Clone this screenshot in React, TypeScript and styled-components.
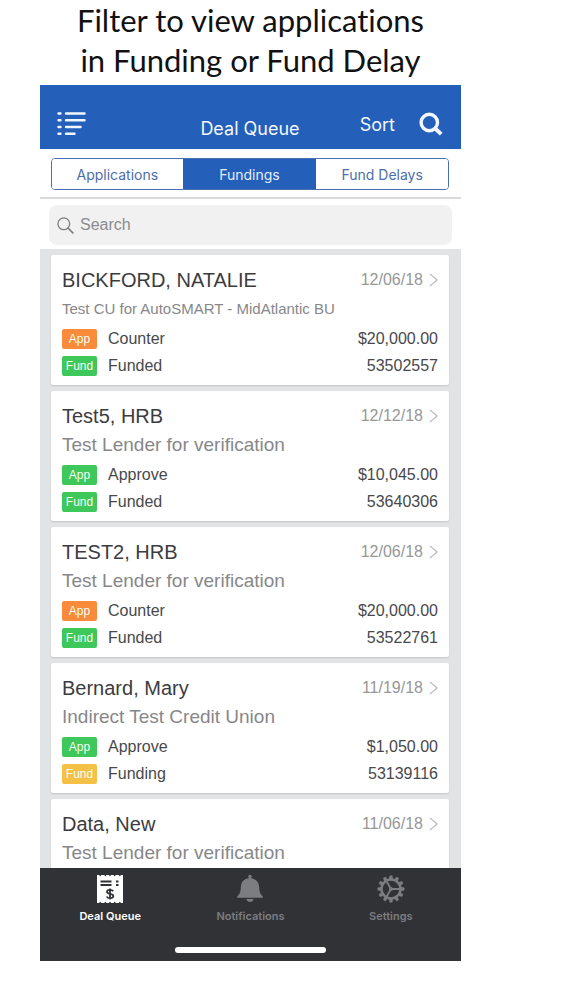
import React, { useState } from "react";
import styled, { createGlobalStyle } from "styled-components";

const GlobalStyle = createGlobalStyle`
  *, *::before, *::after { box-sizing: border-box; }
  body {
    margin: 0;
    background: #fff;
    font-family: "Liberation Sans", Arial, sans-serif;
  }
  button { font: inherit; border: 0; background: none; padding: 0; cursor: pointer; }
`;

const uiFont = `Inter, "Liberation Sans", sans-serif`;

const Page = styled.main`
  display: flex;
  flex-direction: column;
  height: 100vh;
  padding: 0 102px 39px 40px;
`;

const Caption = styled.h1`
  margin: 0;
  padding-bottom: 5px;
  color: #111;
  font: 400 31px/40px Lato, sans-serif;
  font-variant-ligatures: none;
  text-align: center;
`;

const Phone = styled.section`
  display: flex;
  flex: 1;
  flex-direction: column;
  min-height: 0;
  background: #fff;
`;

const Header = styled.header`
  display: grid;
  grid-template-columns: 1fr auto 1fr;
  align-items: end;
  height: 64px;
  padding: 0 18px 9px 17px;
  background: #2460b9;
  color: #f2f7ff;
  font-family: ${uiFont};
`;

const Title = styled.h2`
  margin: 0;
  font-size: 18px;
  font-weight: 400;
  line-height: 22px;
`;

const HeaderButton = styled.button`
  display: flex;
  align-items: center;
  height: 32px;
  color: inherit;
  font-size: 18px;
`;

const HeaderActions = styled.div`
  display: flex;
  justify-content: flex-end;
  gap: 24px;
`;

const Segments = styled.nav`
  padding: 9px 12px 7px 11px;
  border-bottom: 2px solid #d9dadb;
`;

const SegmentGroup = styled.div`
  display: grid;
  grid-template-columns: 131fr 134fr 132fr;
  overflow: hidden;
  border: 1px solid #4a6fae;
  border-radius: 4px;
`;

const Segment = styled.button<{ $active: boolean }>`
  height: 30px;
  background: ${(p) => (p.$active ? "#2460b9" : "#fff")};
  color: ${(p) => (p.$active ? "#e4eefb" : "#4c6ea9")};
  font-family: ${uiFont};
  font-size: 14px;
`;

const SearchBar = styled.label`
  display: flex;
  align-items: center;
  gap: 6px;
  height: 40px;
  margin: 6px 9px 4px;
  padding: 0 8px;
  border-radius: 8px;
  background: #f1f1f2;
  color: #7f7f82;
`;

const SearchInput = styled.input`
  flex: 1;
  min-width: 0;
  padding: 0;
  border: 0;
  outline: 0;
  background: none;
  color: #444;
  font: 16px/20px "Liberation Sans", Arial, sans-serif;
  &::placeholder { color: #8b8b8e; opacity: 1; }
`;

const DealList = styled.ul`
  display: flex;
  flex: 1;
  flex-direction: column;
  gap: 6px;
  min-height: 0;
  margin: 0;
  padding: 6px 12px 6px 11px;
  overflow-y: auto;
  scrollbar-width: none;
  background: #e2e3e5;
  list-style: none;
`;

const Card = styled.li`
  flex: none;
  padding: 13px 11px 9px;
  border-radius: 2px;
  background: #fff;
  box-shadow: 0 1px 2px rgba(0, 0, 0, 0.14);
`;

const CardHead = styled.div`
  display: flex;
  align-items: center;
  justify-content: space-between;
`;

const Name = styled.h3`
  margin: 0;
  color: #3c3c40;
  font-size: 20px;
  font-weight: 400;
  line-height: 24px;
`;

const DateLabel = styled.span`
  display: flex;
  align-items: center;
  gap: 6px;
  color: #97979a;
  font-size: 16px;
`;

const Lender = styled.p<{ $small?: boolean }>`
  margin: 7px 0 10px;
  color: #87878a;
  font-size: ${(p) => (p.$small ? 15 : 19)}px;
  line-height: 20px;
  white-space: nowrap;
`;

const StatusRow = styled.div`
  display: flex;
  align-items: center;
  gap: 11px;
  color: #48484c;
  font-size: 16px;
  line-height: 20px;
  & + & { margin-top: 7px; }
`;

const Badge = styled.span<{ $color: string }>`
  width: 35px;
  border-radius: 2px;
  background: ${(p) => p.$color};
  color: #f4fff4;
  font-size: 12px;
  text-align: center;
`;

const Value = styled.span`
  margin-left: auto;
`;

const TabBar = styled.nav`
  display: flex;
  flex-direction: column;
  align-items: center;
  justify-content: space-between;
  height: 93px;
  padding: 6px 0 8px;
  background: #303236;
`;

const Tabs = styled.div`
  display: grid;
  grid-template-columns: repeat(3, 1fr);
  width: 100%;
`;

const Tab = styled.button<{ $active: boolean }>`
  display: flex;
  flex-direction: column;
  align-items: center;
  gap: 4px;
  color: ${(p) => (p.$active ? "#fff" : "#7c7d80")};
  font-family: ${uiFont};
  font-size: 11px;
  font-weight: 600;
  line-height: 16px;
`;

const HomeIndicator = styled.div`
  width: 36%;
  height: 6px;
  border-radius: 3px;
  background: #fff;
`;

const MenuIcon = () => (
  <svg width="29" height="24" viewBox="0 0 29 24" stroke="currentColor" strokeWidth="2.400" strokeLinecap="round" aria-hidden="true">
    <path d="M1.500 1.500h2M1.500 8.200h2M1.500 15h2M1.500 21.800h2M9 1.500h18.500M9 8.200h18.500M9 15h14.500M9 21.800h8.500" />
  </svg>
);

const SearchIcon = () => (
  <svg width="24" height="24" viewBox="0 0 24 24" fill="none" stroke="currentColor" aria-hidden="true">
    <circle cx="10.300" cy="10.500" r="8.200" strokeWidth="3.400" />
    <path d="M16.200 16.500l6 5.600" strokeWidth="4" />
  </svg>
);

const ThinSearchIcon = () => (
  <svg width="17" height="17" viewBox="0 0 17 17" fill="none" stroke="currentColor" strokeWidth="1.300" aria-hidden="true">
    <circle cx="6.800" cy="6.800" r="5.900" />
    <path d="M11 11l5.300 5.300" strokeWidth="1.700" />
  </svg>
);

const Chevron = () => (
  <svg width="9" height="14" viewBox="0 0 9 14" fill="none" stroke="#c3c3c6" strokeWidth="1.500" aria-hidden="true">
    <path d="M1 1l7 6-7 6" />
  </svg>
);

const ReceiptIcon = () => (
  <svg width="26" height="30" viewBox="0 0 26 30" aria-hidden="true">
    <path
      fill="currentColor"
      d="M0 1h2.200q1 2.400 2 0h3.200q1 2.400 2 0h2.600q1 2.400 2 0h2.600q1 2.400 2 0h3.200q1 2.400 2 0H26v28h-2.200q-1-2.400-2 0h-3.200q-1-2.400-2 0h-2.600q-1-2.400-2 0H9.400q-1-2.400-2 0H4.200q-1-2.400-2 0H0z"
    />
    <path d="M3.500 7.500h11M3.500 11h11M19 7.500h2.500M19 11h2.500" stroke="#303236" strokeWidth="1.800" />
    <path
      d="M16.200 17.200c-.6-1-1.700-1.400-3.200-1.400-1.800 0-3 .8-3 2 0 1.400 1.400 1.800 3.100 2.100 1.900.3 3.200.8 3.200 2.200 0 1.300-1.300 2.100-3.200 2.100-1.700 0-2.900-.6-3.400-1.700M13 14.600v11"
      fill="none"
      stroke="#303236"
      strokeWidth="1.800"
    />
  </svg>
);

const BellIcon = () => (
  <svg width="26" height="30" viewBox="0 0 26 30" fill="currentColor" aria-hidden="true">
    <circle cx="13" cy="2.400" r="1.700" />
    <path d="M11.900 3h2.200v1.200c4.800.5 7.700 3.700 8 8.300.3 5.300.8 7.600 3.700 9.700v1.600H.2v-1.600c2.900-2.100 3.400-4.400 3.700-9.700.3-4.600 3.200-7.800 8-8.300z" />
    <path d="M9.400 25h7.200c-.4 1.900-1.800 3-3.600 3s-3.200-1.100-3.600-3z" />
  </svg>
);

const GearIcon = () => (
  <svg width="28" height="30" viewBox="-14 -15 28 30" fill="none" stroke="currentColor" aria-hidden="true">
    <circle r="9.500" strokeWidth="2.400" />
    {Array.from({ length: 12 }, (_, i) => (
      <path key={i} d="M-1.700-10L-1.200-13.200H1.200L1.700-10z" fill="currentColor" strokeWidth=".5" transform={`rotate(${i * 30})`} />
    ))}
    <circle r="2" fill="currentColor" stroke="none" />
    <path d="M0 0h9M0 0l-4.600-8M0 0l-4.600 8" strokeWidth="1.800" />
  </svg>
);

const ORANGE = "#f98b3b";
const GREEN = "#3ec75b";
const YELLOW = "#f5c046";

type Deal = {
  name: string;
  date: string;
  lender: string;
  small?: boolean;
  statuses: { kind: "App" | "Fund"; label: string; color: string; value: string }[];
};

const deals: Deal[] = [
  {
    name: "BICKFORD, NATALIE",
    date: "12/06/18",
    lender: "Test CU for AutoSMART - MidAtlantic BU",
    small: true,
    statuses: [
      { kind: "App", label: "Counter", color: ORANGE, value: "$20,000.00" },
      { kind: "Fund", label: "Funded", color: GREEN, value: "53502557" },
    ],
  },
  {
    name: "Test5, HRB",
    date: "12/12/18",
    lender: "Test Lender for verification",
    statuses: [
      { kind: "App", label: "Approve", color: GREEN, value: "$10,045.00" },
      { kind: "Fund", label: "Funded", color: GREEN, value: "53640306" },
    ],
  },
  {
    name: "TEST2, HRB",
    date: "12/06/18",
    lender: "Test Lender for verification",
    statuses: [
      { kind: "App", label: "Counter", color: ORANGE, value: "$20,000.00" },
      { kind: "Fund", label: "Funded", color: GREEN, value: "53522761" },
    ],
  },
  {
    name: "Bernard, Mary",
    date: "11/19/18",
    lender: "Indirect Test Credit Union",
    statuses: [
      { kind: "App", label: "Approve", color: GREEN, value: "$1,050.00" },
      { kind: "Fund", label: "Funding", color: YELLOW, value: "53139116" },
    ],
  },
  { name: "Data, New", date: "11/06/18", lender: "Test Lender for verification", statuses: [] },
];

const segments = ["Applications", "Fundings", "Fund Delays"];

const tabs = [
  { label: "Deal Queue", icon: <ReceiptIcon /> },
  { label: "Notifications", icon: <BellIcon /> },
  { label: "Settings", icon: <GearIcon /> },
];

export default function App() {
  const [segment, setSegment] = useState("Fundings");
  const [tab, setTab] = useState("Deal Queue");

  return (
    <>
      <GlobalStyle />
      <Page>
        <Caption>
          Filter to view applications
          <br />
          in Funding or Fund Delay
        </Caption>
        <Phone>
          <Header>
            <HeaderButton aria-label="Menu"><MenuIcon /></HeaderButton>
            <Title>Deal Queue</Title>
            <HeaderActions>
              <HeaderButton>Sort</HeaderButton>
              <HeaderButton aria-label="Search deals"><SearchIcon /></HeaderButton>
            </HeaderActions>
          </Header>
          <Segments>
            <SegmentGroup>
              {segments.map((s) => (
                <Segment key={s} $active={s === segment} aria-pressed={s === segment} onClick={() => setSegment(s)}>
                  {s}
                </Segment>
              ))}
            </SegmentGroup>
          </Segments>
          <SearchBar>
            <ThinSearchIcon />
            <SearchInput type="text" placeholder="Search" aria-label="Search" />
          </SearchBar>
          <DealList>
            {deals.map((d) => (
              <Card key={d.name}>
                <CardHead>
                  <Name>{d.name}</Name>
                  <DateLabel>{d.date}<Chevron /></DateLabel>
                </CardHead>
                <Lender $small={d.small}>{d.lender}</Lender>
                {d.statuses.map((s) => (
                  <StatusRow key={s.kind}>
                    <Badge $color={s.color}>{s.kind}</Badge>
                    {s.label}
                    <Value>{s.value}</Value>
                  </StatusRow>
                ))}
              </Card>
            ))}
          </DealList>
          <TabBar>
            <Tabs>
              {tabs.map((t) => (
                <Tab key={t.label} $active={t.label === tab} onClick={() => setTab(t.label)}>
                  {t.icon}
                  {t.label}
                </Tab>
              ))}
            </Tabs>
            <HomeIndicator />
          </TabBar>
        </Phone>
      </Page>
    </>
  );
}
